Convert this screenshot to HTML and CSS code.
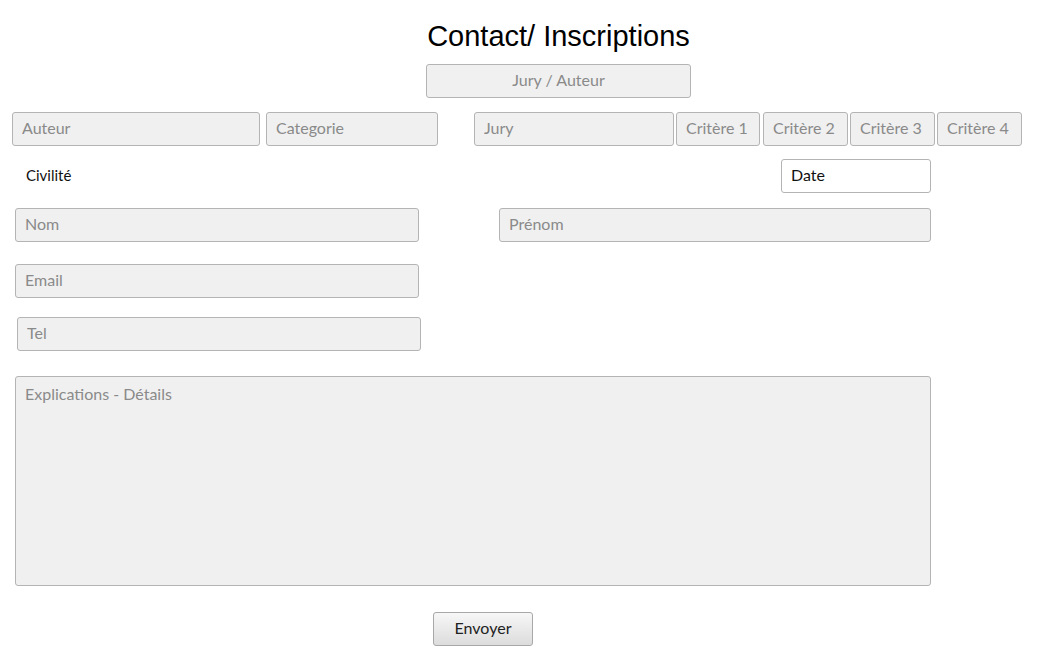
FILE: index.html
```html
<!DOCTYPE html>
<html lang="fr">
<head>
<meta charset="utf-8">
<title>Contact/ Inscriptions</title>
<link rel="stylesheet" href="styles.css">
</head>
<body>
<form class="page">
  <h1 class="title">Contact/ Inscriptions</h1>
  <div class="row-center">
    <input class="field center jury-auteur" placeholder="Jury / Auteur">
  </div>
  <div class="row row-cats">
    <input class="field w-auteur" placeholder="Auteur">
    <input class="field w-categorie" placeholder="Categorie">
    <input class="field w-jury" placeholder="Jury">
    <div class="criteres">
      <input class="field crit c1" placeholder="Critère 1">
      <input class="field crit c2" placeholder="Critère 2">
      <input class="field crit c3" placeholder="Critère 3">
      <input class="field crit c4" placeholder="Critère 4">
    </div>
  </div>
  <div class="row row-civ">
    <label class="civ">Civilité</label>
    <input class="field date" value="Date" readonly>
  </div>
  <div class="row row-nom">
    <input class="field w-nom" placeholder="Nom">
    <input class="field w-prenom" placeholder="Prénom">
  </div>
  <div class="row row-email">
    <input class="field w-nom" placeholder="Email">
  </div>
  <div class="row row-tel">
    <input class="field w-nom" placeholder="Tel">
  </div>
  <div class="row row-text">
    <textarea class="field area" placeholder="Explications - Détails"></textarea>
  </div>
  <div class="row row-btn">
    <button type="button" class="btn">Envoyer</button>
  </div>
</form>
</body>
</html>
```
FILE: styles.css
```css
* { box-sizing: border-box; }
html, body { margin: 0; padding: 0; background: #fff; }
body { font-family: Lato, "Open Sans", sans-serif; color: #222; }
.page { width: 1041px; padding-top: 18px; margin: 0; }
.title {
  margin: 0;
  padding-left: 76px;
  text-align: center;
  font-family: "Liberation Sans", Arial, sans-serif;
  font-weight: normal;
  font-size: 29px;
  line-height: 36px;
  color: #000;
}
.row-center { display: flex; justify-content: center; padding-left: 76px; margin-top: 10px; }
.field {
  height: 34px;
  border: 1px solid #b4b4b4;
  border-radius: 3px;
  background: #f0f0f0;
  font-family: Lato, "Open Sans", sans-serif;
  font-size: 16px;
  color: #333;
  padding: 0 9px 3px;
  outline: none;
  margin: 0;
}
.field::placeholder { color: #8a8a8a; opacity: 1; }
.center { text-align: center; }
.jury-auteur { width: 265px; }
.row { display: flex; align-items: center; }
.row-cats { margin-top: 14px; padding-left: 12px; }
.w-auteur { width: 248px; }
.w-categorie { width: 172px; margin-left: 6px; }
.w-jury { width: 200px; margin-left: 36px; }
.criteres { display: flex; gap: 2px; margin-left: 2px; }
.crit { width: 85px; }
.c1 { width: 84px; }
.c2 { margin-left: 1px; }
.row-civ { margin-top: 13px; padding-left: 26px; height: 34px; }
.civ { font-size: 15px; color: #111; width: 755px; padding-bottom: 2px; }
.date { width: 150px; background: #fff; color: #111; }
.row-nom { margin-top: 15px; padding-left: 15px; }
.w-nom { width: 404px; }
.w-prenom { width: 432px; margin-left: 80px; }
.row-email { margin-top: 22px; padding-left: 15px; }
.row-tel { margin-top: 19px; padding-left: 17px; }
.row-text { margin-top: 25px; padding-left: 15px; }
.area {
  width: 916px;
  height: 210px;
  resize: none;
  padding: 7px 9px;
  display: block;
}
.row-btn { margin-top: 26px; padding-left: 433px; }
.btn {
  width: 100px;
  height: 34px;
  border: 1px solid #a8a8a8;
  border-radius: 3px;
  background: linear-gradient(#f7f7f7, #dcdcdc);
  font-family: Lato, "Open Sans", sans-serif;
  font-size: 16px;
  color: #222;
  padding: 0 0 3px;
}
```
